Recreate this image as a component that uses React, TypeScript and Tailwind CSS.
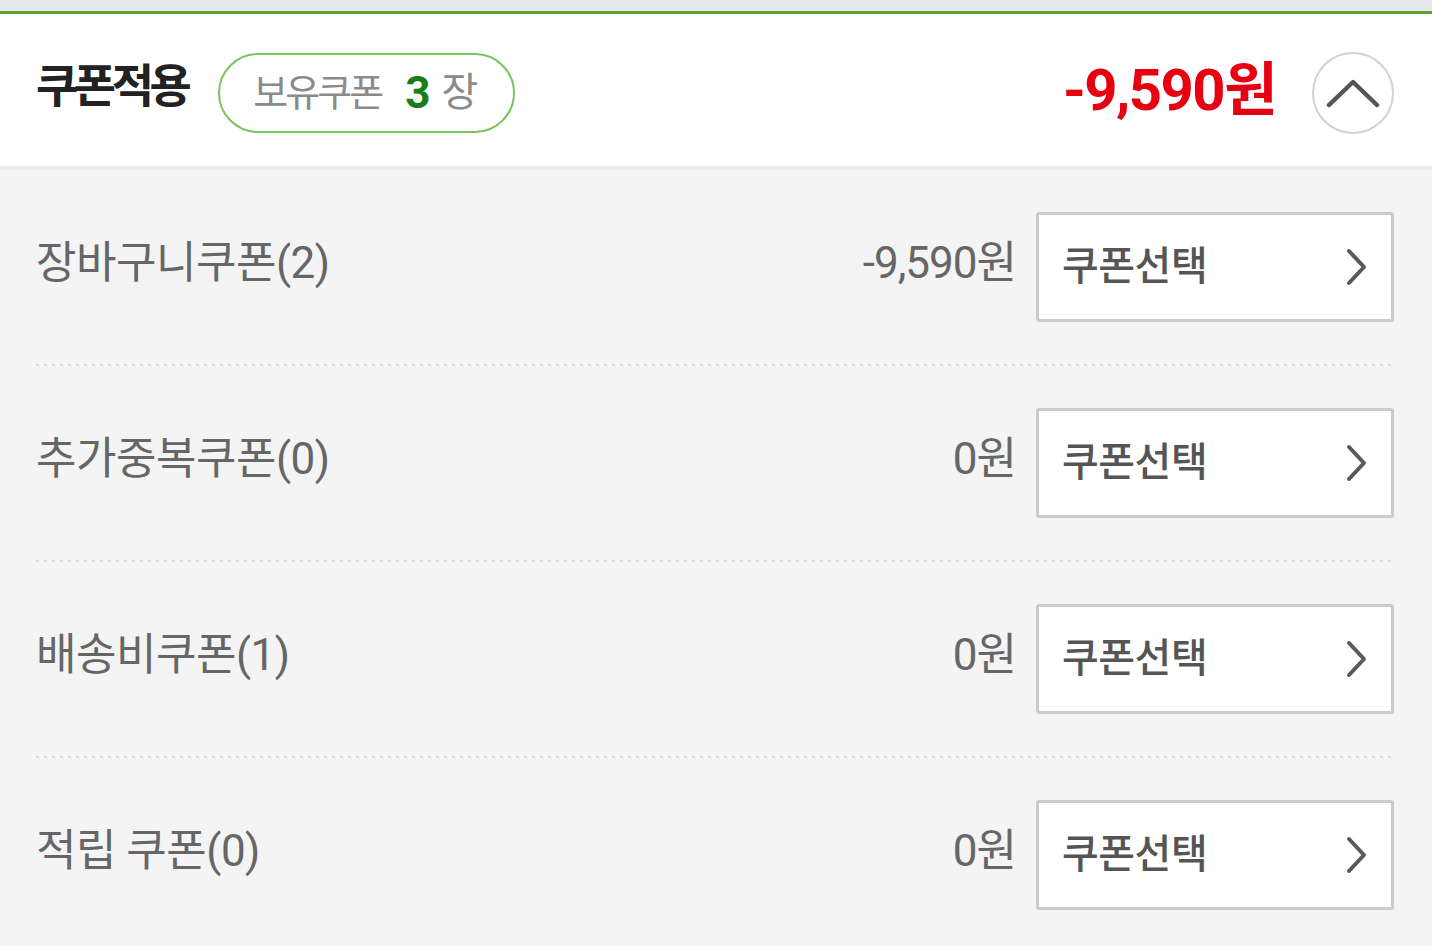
const rows = [
  { label: "장바구니쿠폰(2)", amount: "-9,590원" },
  { label: "추가중복쿠폰(0)", amount: "0원" },
  { label: "배송비쿠폰(1)", amount: "0원" },
  { label: "적립 쿠폰(0)", amount: "0원" },
];

const font = { fontFamily: "Roboto, 'Noto Sans CJK KR', sans-serif" };

const ChevronRight = () => (
  <svg width="24" height="38" viewBox="0 0 24 38" fill="none">
    <path d="M4 3 L19 19 L4 35" stroke="#5a5a5a" strokeWidth="4" strokeLinecap="round" strokeLinejoin="round" />
  </svg>
);

const ChevronUp = () => (
  <svg width="54" height="32" viewBox="0 0 54 32" fill="none">
    <path d="M3 28 L27 5 L51 28" stroke="#555" strokeWidth="4.5" strokeLinecap="round" strokeLinejoin="round" />
  </svg>
);

const CouponRow = ({ label, amount, last }: { label: string; amount: string; last: boolean }) => {
  return (
    <div className="flex flex-col">
      <div className="flex items-center py-[42px]">
        <span className="flex-1 text-[44px] tracking-[-0.5px] text-[#666] leading-none -mt-[8px]">{label}</span>
        <span className="text-[44px] tracking-[-1px] text-[#666] leading-none -mt-[8px] mr-[20px]">{amount}</span>
        <button className="w-[358px] h-[110px] bg-white border-[3px] border-[#cbcbcb] rounded-[3px] flex items-center justify-between pl-[23px] pr-[22px]">
          <span className="text-[40px] font-medium tracking-[-0.5px] text-[#555] leading-none">쿠폰선택</span>
          <ChevronRight />
        </button>
      </div>
      {!last && (
        <div className="h-[2px] bg-[linear-gradient(to_right,#dcdcdc_3px,transparent_3px)] bg-[length:8px_2px] bg-repeat-x" />
      )}
    </div>
  );
};

export default function App() {
  return (
    <div className="w-[1432px] h-[946px] overflow-hidden bg-[#f4f4f4]" style={font}>
      <div className="h-[11px] bg-[#e6e8ec]" />
      <div className="h-[3px] bg-[#5aa830]" />
      <div className="h-[152px] bg-white flex items-center pl-[36px] pr-[38px] pt-[5px]">
        <h1 className="text-[46px] font-bold tracking-[-4.5px] text-[#222] leading-none -mt-[14px]">쿠폰적용</h1>
        <div className="ml-[31px] h-[80px] w-[297px] rounded-full border-2 border-[#7cc35e] flex items-center pl-[33px]">
          <span className="text-[38px] tracking-[-3px] text-[#8a8a8a] leading-none">보유쿠폰</span>
          <span className="ml-[24px] text-[44px] font-bold text-[#1a7d1a] leading-none">3</span>
          <span className="ml-[11px] text-[40px] text-[#8a8a8a] leading-none">장</span>
        </div>
        <div className="flex-1" />
        <span className="text-[58px] font-bold tracking-[-1.5px] text-[#e60012] leading-none -mt-[6px]">-9,590원</span>
        <button className="ml-[36px] w-[82px] h-[82px] rounded-full border-2 border-[#d2d2d2] flex items-center justify-center bg-white">
          <ChevronUp />
        </button>
      </div>
      <div className="h-[4px] bg-[#ebebeb]" />
      <div className="pl-[36px] pr-[38px]">
        {rows.map((r, i) => (
          <CouponRow key={i} label={r.label} amount={r.amount} last={i === rows.length - 1} />
        ))}
      </div>
    </div>
  );
}
